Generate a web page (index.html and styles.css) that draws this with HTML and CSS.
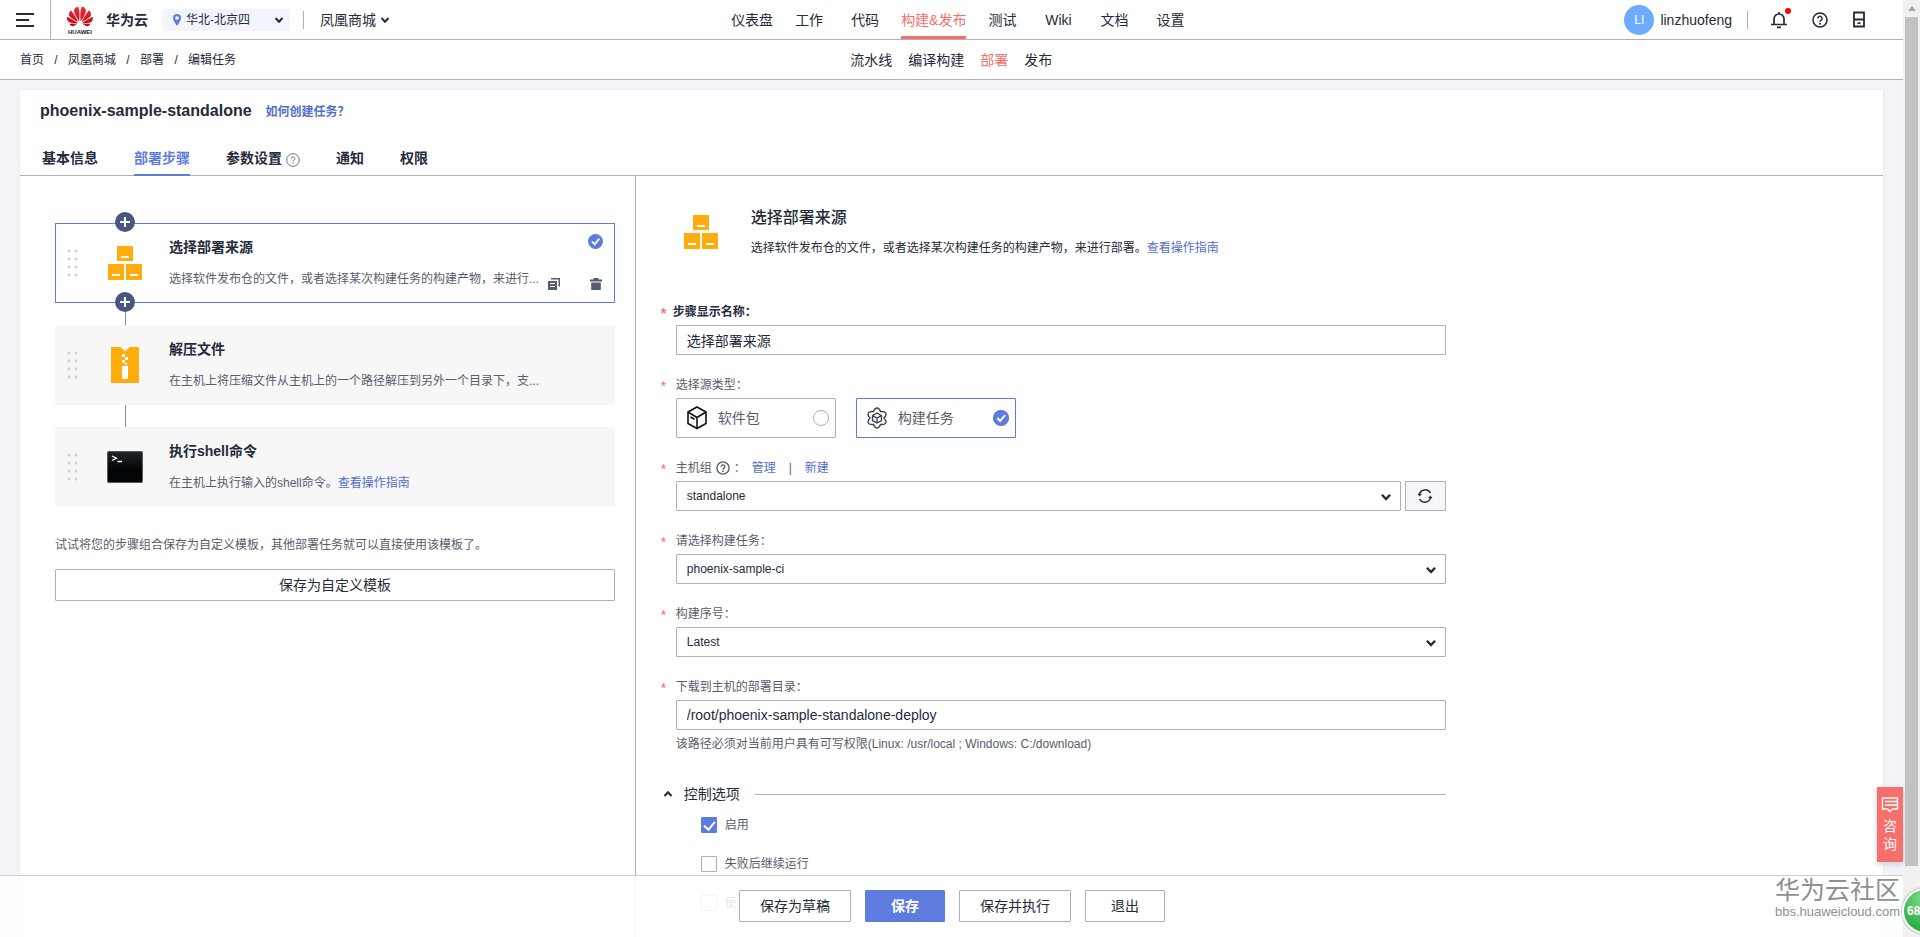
FILE: index.html
```html
<!DOCTYPE html>
<html lang="zh-CN">
<head>
<meta charset="utf-8">
<title>编辑任务 - 部署</title>
<link rel="stylesheet" href="styles.css">
</head>
<body>
<svg class="defs" aria-hidden="true">
  <symbol id="i-chevron" viewBox="0 0 12 12"><path d="M2.500 4l3.500 3.800L9.500 4" fill="none" stroke="currentColor" stroke-width="2"/></symbol>
  <symbol id="i-help" viewBox="0 0 16 16"><circle cx="8" cy="8" r="7" fill="none" stroke="currentColor" stroke-width="1.600"/><path d="M5.900 6.500a2.100 2.100 0 1 1 3.300 1.700c-.8.500-1.200.8-1.200 1.500" fill="none" stroke="currentColor" stroke-width="1.500"/><circle cx="8" cy="11.700" r="1" fill="currentColor"/></symbol>
  <symbol id="i-help-thin" viewBox="0 0 16 16"><circle cx="8" cy="8" r="7.200" fill="none" stroke="currentColor"/><path d="M5.900 6.500a2.100 2.100 0 1 1 3.300 1.700c-.8.500-1.200.8-1.200 1.500" fill="none" stroke="currentColor"/><circle cx="8" cy="11.500" r=".7" fill="currentColor"/></symbol>
  <symbol id="i-boxes" viewBox="0 0 34 34"><path d="M9 0h16v15H9zM0 18h16v16H0zM18 18h16v16H18z" fill="#ffac0c"/><path d="M13 10h8v2h-8zM4 28h8v2H4zM22 28h8v2h-8z" fill="#fff"/></symbol>
  <symbol id="i-check" viewBox="0 0 16 16"><circle cx="8" cy="8" r="8" fill="#5e7ce0"/><path d="M4.300 8l2.800 3 5-6" fill="none" stroke="#fff" stroke-width="1.900"/></symbol>
  <symbol id="i-dots" viewBox="0 0 12 28"><g fill="#d0d1d6"><circle cx="2" cy="2" r="1.500"/><circle cx="9" cy="2" r="1.500"/><circle cx="2" cy="10" r="1.500"/><circle cx="9" cy="10" r="1.500"/><circle cx="2" cy="18" r="1.500"/><circle cx="9" cy="18" r="1.500"/><circle cx="2" cy="26" r="1.500"/><circle cx="9" cy="26" r="1.500"/></g></symbol>
  <symbol id="i-plus" viewBox="0 0 20 20"><circle cx="10" cy="10" r="10" fill="#4a5682"/><path d="M10 5v10M5 10h10" stroke="#fff" stroke-width="2"/></symbol>
</svg>

<div class="window">
  <div class="app">
    <header class="topbar">
      <div class="topbar-left">
        <button class="menu-btn" aria-label="菜单"><svg width="18" height="16" viewBox="0 0 18 16"><path d="M0 2h18M0 8h13M0 14h18" stroke="#252b3a" stroke-width="2" fill="none"/></svg></button>
        <a class="brand" href="#">
          <svg width="28" height="30" viewBox="0 0 28 30">
            <defs><linearGradient id="red" x1="0" y1="0" x2="0" y2="1"><stop offset="0" stop-color="#f0303a"/><stop offset="1" stop-color="#c00612"/></linearGradient></defs>
            <path transform="translate(1 -1.500) scale(1.080)" fill="url(#red)" d="M3.670 6.140S1.820 7.910 1.720 9.780v.35c.08 1.510 1.220 2.400 1.220 2.400 1.830 1.790 6.260 4.040 7.300 4.550 0 0 .06.03.1-.01l.02-.04v-.04C7.520 10.800 3.670 6.140 3.670 6.140zM9.650 18.600c-.02-.08-.1-.08-.1-.08l-7.380.26c.8 1.430 2.150 2.530 3.560 2.200.96-.25 3.160-1.780 3.880-2.300.06-.05.04-.09.04-.09zm.08-.78C6.490 15.630.21 12.280.21 12.280c-.15.46-.2.9-.21 1.300v.07c0 1.070.4 1.820.4 1.820.8 1.690 2.340 2.200 2.340 2.200.7.3 1.400.31 1.400.31.12.02 4.390 0 5.540 0 .05 0 .08-.05.08-.05v-.06c0-.03-.03-.05-.03-.05zM9.060 3.190a3.420 3.420 0 00-2.570 3.150v.41c.03.6.16 1.050.16 1.050.66 2.900 3.860 7.650 4.550 8.650.05.05.1.03.1.03a.1.1 0 00.06-.1c1.060-10.600-1.110-13.420-1.110-13.420-.32.02-1.190.23-1.190.23zm8.299 2.270s-.49-1.800-2.440-2.280c0 0-.57-.14-1.170-.22 0 0-2.180 2.810-1.120 13.430.01.07.06.08.06.08.07.03.1-.03.1-.03.72-1.030 3.900-5.760 4.550-8.640 0 0 .36-1.400.02-2.340zm-2.920 13.070s-.07 0-.09.05c0 0-.01.07.03.1.7.51 2.850 2 3.880 2.300 0 0 .16.05.43.06h.14c.69-.02 1.900-.37 3-2.260l-7.400-.25zm7.830-8.410c.14-2.060-1.940-3.970-1.940-3.980 0 0-3.850 4.660-6.670 10.800 0 0-.03.08.02.13l.04.01h.06c1.060-.53 5.460-2.770 7.280-4.540 0 0 1.150-.93 1.210-2.420zm1.520 2.140s-6.280 3.370-9.520 5.550c0 0-.05.04-.03.11 0 0 .03.06.07.06 1.160 0 5.560 0 5.670-.02 0 0 .57-.02 1.270-.29 0 0 1.560-.5 2.370-2.270 0 0 .73-1.450.17-3.140z"/>
            <text x="14" y="29" text-anchor="middle" class="logo-text">HUAWEI</text>
          </svg>
          <strong>华为云</strong>
        </a>
        <button class="region">
          <svg width="10" height="14" viewBox="0 0 10 14"><path d="M5 1a4 4 0 0 0-4 4c0 3 4 7.800 4 7.800S9 8 9 5a4 4 0 0 0-4-4z" fill="#5e7ce0"/><circle cx="5" cy="5" r="1.800" fill="#fff"/></svg>
          <span>华北-北京四</span>
          <svg class="end" width="12" height="12"><use href="#i-chevron"/></svg>
        </button>
        <i class="rule"></i>
        <button class="project">凤凰商城<svg width="12" height="12"><use href="#i-chevron"/></svg></button>
      </div>
      <nav class="mainnav">
        <a href="#">仪表盘</a><a href="#">工作</a><a href="#">代码</a><a href="#" class="active">构建&amp;发布</a><a href="#">测试</a><a href="#">Wiki</a><a href="#">文档</a><a href="#">设置</a>
      </nav>
      <div class="topbar-right">
        <span class="avatar">LI</span>
        <span class="user">linzhuofeng</span>
        <i class="rule"></i>
        <button class="icon-btn" aria-label="消息"><svg width="18" height="18" viewBox="0 0 18 18"><path d="M4 13V8a5 5 0 0 1 10 0v5M1 13.500h16M9 1v2" fill="none" stroke="#252b3a" stroke-width="1.700"/><path d="M7 15.500h4v1.700H7z" fill="#252b3a"/></svg><b class="dot"></b></button>
        <button class="icon-btn" aria-label="帮助"><svg width="16" height="16"><use href="#i-help"/></svg></button>
        <button class="icon-btn" aria-label="控制台"><svg width="14" height="17" viewBox="0 0 14 17"><path d="M2 1.500h10v14H2zM2 8.500h10" fill="none" stroke="#252b3a" stroke-width="1.800"/><path d="M5.500 11.300h3v1.700h-3z" fill="#252b3a"/></svg></button>
      </div>
    </header>

    <div class="subbar">
      <nav class="crumbs"><a href="#">首页</a><i>/</i><a href="#">凤凰商城</a><i>/</i><a href="#">部署</a><i>/</i><span>编辑任务</span></nav>
      <nav class="subnav"><a href="#">流水线</a><a href="#">编译构建</a><a href="#" class="active">部署</a><a href="#">发布</a></nav>
    </div>

    <main class="page">
      <div class="card">
        <div class="title-row"><h1>phoenix-sample-standalone</h1><a href="#">如何创建任务？</a></div>
        <nav class="tabs">
          <a href="#">基本信息</a><a href="#" class="active">部署步骤</a><a href="#">参数设置<svg width="14" height="14"><use href="#i-help-thin"/></svg></a><a href="#">通知</a><a href="#">权限</a>
        </nav>
        <div class="split">
          <section class="steps">
            <article class="step selected">
              <button class="plus top" aria-label="在前面添加"><svg width="20" height="20"><use href="#i-plus"/></svg></button>
              <svg class="grip" width="12" height="28"><use href="#i-dots"/></svg>
              <div class="step-icon"><svg width="34" height="34"><use href="#i-boxes"/></svg></div>
              <div class="step-text"><h3>选择部署来源</h3><p>选择软件发布仓的文件，或者选择某次构建任务的构建产物，来进行...</p></div>
              <div class="step-tools">
                <svg class="mark" width="15" height="15"><use href="#i-check"/></svg>
                <button aria-label="复制"><svg width="12" height="12" viewBox="0 0 12 12"><path d="M3 0h9v8.500h-1.500v-7H3zM0 3h9v9H0z" fill="#575d6c"/><path d="M2 5.500h5M2 8.500h5" stroke="#fff"/></svg></button>
                <button aria-label="删除"><svg width="12" height="12" viewBox="0 0 12 12"><path d="M0 1.500h3.500V0h5v1.500H12V3.500H0zM1.200 4.500h9.600V12H1.200z" fill="#575d6c"/></svg></button>
              </div>
              <button class="plus bottom" aria-label="在后面添加"><svg width="20" height="20"><use href="#i-plus"/></svg></button>
            </article>
            <i class="link"></i>
            <article class="step">
              <svg class="grip" width="12" height="28"><use href="#i-dots"/></svg>
              <div class="step-icon"><svg width="28" height="36" viewBox="0 0 28 36"><path d="M0 0h9.500L14 4.500 18.500 0H28v36H0z" fill="#ffac0c"/><path d="M11 7h3v3h-3zM14 10h3v3h-3zM11 13h3v3h-3zM14 16h2v2h-2zM11 19h6v13h-6z" fill="#fff"/></svg></div>
              <div class="step-text"><h3>解压文件</h3><p>在主机上将压缩文件从主机上的一个路径解压到另外一个目录下，支...</p></div>
              <div class="step-tools"></div>
            </article>
            <i class="link"></i>
            <article class="step">
              <svg class="grip" width="12" height="28"><use href="#i-dots"/></svg>
              <div class="step-icon"><svg width="36" height="32" viewBox="0 0 36 32"><defs><linearGradient id="term" x1="0" y1="0" x2="0" y2="1"><stop offset="0" stop-color="#20262a"/><stop offset=".6" stop-color="#020406"/></linearGradient></defs><rect x=".5" y=".5" width="35" height="31" rx="1" fill="url(#term)" stroke="#55595d"/><path d="M5 5l4.500 2.200L5 9.500M10.500 10.500H15" fill="none" stroke="#fff" stroke-width="1.300"/></svg></div>
              <div class="step-text"><h3>执行shell命令</h3><p>在主机上执行输入的shell命令。<a href="#">查看操作指南</a></p></div>
              <div class="step-tools"></div>
            </article>
            <p class="tip">试试将您的步骤组合保存为自定义模板，其他部署任务就可以直接使用该模板了。</p>
            <button class="btn wide">保存为自定义模板</button>
          </section>

          <section class="detail">
            <div class="detail-head">
              <svg width="34" height="34"><use href="#i-boxes"/></svg>
              <div><h2>选择部署来源</h2><p>选择软件发布仓的文件，或者选择某次构建任务的构建产物，来进行部署。<a href="#">查看操作指南</a></p></div>
            </div>
            <form class="form">
              <div class="field">
                <label class="label strong" for="name">步骤显示名称：</label>
                <input class="control" id="name" type="text" value="选择部署来源">
              </div>
              <div class="field">
                <span class="label" id="src">选择源类型：</span>
                <div class="choices" role="radiogroup" aria-labelledby="src">
                  <label class="choice">
                    <svg width="22" height="24" viewBox="0 0 22 24"><path d="M11 1l9 5v11.500l-9 5-9-5V6zM2 6l9 5.500L20 6M11 11.500v11M4.500 11l4 2.300" fill="none" stroke="#111" stroke-width="1.600"/></svg>
                    <span>软件包</span><input type="radio" name="source">
                  </label>
                  <label class="choice on">
                    <svg width="20" height="22" viewBox="0 0 20 22"><g fill="none" stroke="#3c4150" stroke-width="1.400"><path d="M10 6l4.500 2.600v5L10 16l-4.500-2.400v-5zM5.500 8.600L10 11l4.500-2.400M10 11v5"/><path d="M6.500 4.500C7.500 2 8.800 1 10 1s2.500 1 3.500 3.500c2.800-.2 4.500.2 5.200 1.500s.1 3-1.700 5c1.800 2 2.400 3.700 1.700 5s-2.400 1.700-5.200 1.500C12.500 20 11.200 21 10 21s-2.500-1-3.500-3.500c-2.800.2-4.500-.2-5.200-1.500s-.1-3 1.700-5C1.200 9 .6 7.300 1.300 6s2.400-1.700 5.200-1.500z"/></g></svg>
                    <span>构建任务</span><input type="radio" name="source" checked><svg class="tick" width="16" height="16"><use href="#i-check"/></svg>
                  </label>
                </div>
              </div>
              <div class="field">
                <div class="label-row"><label class="label" for="group">主机组</label><svg width="14" height="14"><use href="#i-help"/></svg><span>：</span><a href="#">管理</a><i>|</i><a href="#">新建</a></div>
                <div class="row">
                  <div class="select"><select class="control" id="group"><option>standalone</option></select><svg width="14" height="14"><use href="#i-chevron"/></svg></div>
                  <button type="button" class="refresh" aria-label="刷新"><svg width="16" height="16" viewBox="0 0 16 16"><path d="M2.300 7A6 6 0 0 1 13.500 5M13.700 9A6 6 0 0 1 2.500 11" fill="none" stroke="#252b3a" stroke-width="1.500"/><path d="M.5 5.500l2 3 2.500-2.500zM15.500 10.500l-2-3L11 10z" fill="#252b3a"/></svg></button>
                </div>
              </div>
              <div class="field">
                <label class="label" for="task">请选择构建任务：</label>
                <div class="select"><select class="control" id="task"><option>phoenix-sample-ci</option></select><svg width="14" height="14"><use href="#i-chevron"/></svg></div>
              </div>
              <div class="field">
                <label class="label" for="build">构建序号：</label>
                <div class="select"><select class="control" id="build"><option>Latest</option></select><svg width="14" height="14"><use href="#i-chevron"/></svg></div>
              </div>
              <div class="field">
                <label class="label" for="dir">下载到主机的部署目录：</label>
                <input class="control" id="dir" type="text" value="/root/phoenix-sample-standalone-deploy">
                <p class="hint">该路径必须对当前用户具有可写权限(Linux: /usr/local ; Windows: C:/download)</p>
              </div>
              <div class="group-head"><svg width="12" height="12"><use href="#i-chevron"/></svg><span>控制选项</span><i></i></div>
              <div class="checks">
                <label><input type="checkbox" checked>启用</label>
                <label><input type="checkbox">失败后继续运行</label>
                <label><input type="checkbox">使</label>
              </div>
            </form>
          </section>
        </div>
      </div>
    </main>

    <footer class="actions">
      <button class="btn">保存为草稿</button>
      <button class="btn primary">保存</button>
      <button class="btn">保存并执行</button>
      <button class="btn">退出</button>
    </footer>
    <button class="consult"><svg width="18" height="16" viewBox="0 0 18 16"><path d="M1.500 1h15v11h-5L9 14.500 6.500 12h-5zM4 4.500h12M4 8h12" fill="none" stroke="#fff" stroke-width="1.400"/></svg><span>咨</span><span>询</span></button>
    <div class="watermark"><b>华为云社区</b><span>bbs.huaweicloud.com</span></div>
  </div>
  <div class="scrollbar"><i class="arrow"></i><i class="thumb"></i></div>
  <div class="ball">68</div>
</div>
</body>
</html>
```

FILE: styles.css
```css
* { box-sizing: border-box; }
body, h1, h2, h3, p { margin: 0; }
body {
  font: 14px/20px "Liberation Sans", "Noto Sans CJK SC", sans-serif;
  color: #252b3a;
  background: #f2f4f8;
}
a { color: inherit; text-decoration: none; }
i { font-style: normal; }
svg { display: block; flex: none; }
button { font: inherit; color: inherit; border: 0; padding: 0; background: none; }
.defs { position: absolute; width: 0; height: 0; }

.window { position: relative; display: flex; height: 100vh; overflow: hidden; }
.app { position: relative; flex: 1; min-width: 0; display: flex; flex-direction: column; }

/* top bar */
.topbar { display: flex; height: 40px; flex: none; background: #fff; border-bottom: 1px solid #adb0b8; }
.topbar-left { flex: 0 0 38%; display: flex; align-items: center; }
.menu-btn { width: 51px; height: 100%; padding-left: 16px; border-right: 1px solid #adb0b8; }
.brand { display: flex; align-items: center; gap: 12px; margin: 0 14px 0 15px; }
.brand strong { font-size: 14px; }
.logo-text { font: bold 6px "Liberation Sans", sans-serif; fill: #222; }
.region { display: flex; align-items: center; gap: 4px; width: 128px; height: 22px; padding: 0 5px 0 10px; background: #f2f5fc; font-size: 12px; }
.region .end { margin-left: auto; }
.rule { width: 1px; height: 18px; background: #adb0b8; }
.topbar-left .rule { margin: 0 16px 0 13px; }
.project { display: flex; align-items: center; gap: 3px; }
.mainnav { display: flex; }
.mainnav a { min-width: 56px; padding: 0 8px; line-height: 40px; text-align: center; position: relative; }
.mainnav .active, .subnav .active { color: #f66f6a; }
.mainnav .active::after { content: ""; position: absolute; left: 8px; right: 8px; bottom: 0; height: 3px; background: #f66f6a; }
.topbar-right { margin-left: auto; display: flex; align-items: center; padding-right: 37px; }
.avatar { width: 30px; height: 30px; border-radius: 50%; background: #6cabff; color: #fff; font-size: 12px; line-height: 30px; text-align: center; }
.user { margin: 0 15px 0 6px; }
.icon-btn { position: relative; margin-left: 24px; }
.rule + .icon-btn { margin-left: 22px; }
.dot { position: absolute; right: -3px; top: -3px; width: 6px; height: 6px; border-radius: 50%; background: #f00; }

.subbar { display: flex; align-items: center; height: 40px; flex: none; background: #fff; border-bottom: 1px solid #adb0b8; }
.crumbs { flex: 0 0 45%; padding-left: 20px; display: flex; font-size: 12px; }
.crumbs i { width: 24px; text-align: center; }
.subnav { display: flex; gap: 16px; margin-left: -6px; }

/* card */
.page { flex: 1; min-height: 0; padding: 10px 20px 0; overflow: hidden; display: flex; }
.card { flex: 1; display: flex; flex-direction: column; background: #fff; box-shadow: 0 0 3px #e0e3ea; }
.title-row { display: flex; align-items: center; gap: 14px; padding: 10px 20px 0; }
.title-row h1 { font-size: 16px; line-height: 22px; }
.title-row a { font-size: 12px; font-weight: bold; color: #526ecc; padding-top: 2px; }
.tabs { display: flex; gap: 36px; margin-top: 17px; padding: 0 22px; border-bottom: 1px solid #adb0b8; font-weight: bold; }
.tabs a { display: flex; align-items: center; gap: 4px; line-height: 20px; height: 37px; padding-top: 3px; margin-bottom: -1px; border-bottom: 2px solid transparent; }
.tabs .active { color: #5e7ce0; border-color: #5e7ce0; }
.tabs svg { color: #575d6c; margin-top: 4px; }
.split { display: flex; flex: 1; }

/* steps */
.steps { flex: 0 0 calc(33% + 1px); min-width: 0; border-right: 1px solid #adb0b8; padding: 47px 20px 0 35px; }
.step { position: relative; display: flex; align-items: stretch; height: 80px; background: #f7f7f8; border: 1px solid transparent; }
.step.selected { background: #fff; border-color: #5e7ce0; }
.grip { margin: 25px 0 0 11px; }
.step-icon { width: 92px; display: flex; align-items: center; justify-content: center; }
.step-text { flex: 1; min-width: 0; margin-left: -2px; padding-top: 12px; }
.step-text h3 { font-size: 14px; line-height: 22px; }
.step-text p { margin-top: 11px; font-size: 12px; line-height: 20px; color: #575d6c; white-space: nowrap; overflow: hidden; text-overflow: ellipsis; }
.step-text a, .detail-head a, .label-row a { color: #526ecc; }
.step-tools { width: 66px; padding: 10px 12px 12px 0; display: grid; grid-template-columns: 12px 12px; justify-content: space-between; align-content: space-between; }
.step-tools .mark { grid-column: 2; justify-self: center; }
.plus { position: absolute; left: 59px; z-index: 1; }
.plus.top { top: -12px; }
.plus.bottom { bottom: -10px; }
.link { display: block; width: 1px; height: 22px; margin-left: 70px; background: #8a8e99; }
.tip { margin: 28px 0 14px; font-size: 12px; line-height: 20px; color: #575d6c; }
.btn { height: 32px; padding: 0 20px; min-width: 80px; background: #fff; border: 1px solid #adb0b8; border-radius: 1px; }
.btn.wide { width: 100%; }
.btn.primary { background: #5e7ce0; border-color: #5e7ce0; color: #fff; font-weight: bold; }

/* detail */
.detail { flex: 1; padding: 30px 25px 0; }
.detail-head { display: flex; gap: 33px; align-items: center; padding-left: 23px; }
.detail-head h2 { font-size: 16px; line-height: 24px; font-weight: 500; }
.detail-head p { margin-top: 8px; font-size: 12px; line-height: 20px; }
.form { width: 100%; max-width: 785px; margin-top: 44px; padding-left: 15px; }
.field { margin-bottom: 20px; }
.label, .label-row { font-size: 12px; line-height: 20px; color: #575d6c; }
.label { display: block; margin-left: -15px; }
.label::before { content: "*"; display: inline-block; width: 15px; color: #f66f6a; font-size: 14px; line-height: 14px; vertical-align: -2px; }
.label.strong { color: #252b3a; font-weight: bold; }
.label.strong::before { width: 12px; }
.label-row { display: flex; align-items: center; gap: 4px; }
.label-row span { width: 14px; }
.label-row i { width: 21px; text-align: center; }
.control { display: block; width: 100%; height: 30px; margin: 0; padding: 0 10px; border: 1px solid #adb0b8; border-radius: 1px; background: #fff; color: #252b3a; font: 14px "Liberation Sans", "Noto Sans CJK SC", sans-serif; appearance: none; }
select.control { font-size: 12px; }
.field .control, .field .choices, .field .row { margin-top: 3px; }
.field .row .control { margin-top: 0; }
.select { position: relative; flex: 1; }
.select svg { position: absolute; right: 8px; bottom: 7px; pointer-events: none; }
.row { display: flex; gap: 4px; }
.refresh { width: 41px; height: 30px; border: 1px solid #adb0b8; background: #f6f7fb; display: flex; align-items: center; justify-content: center; }
.choices { display: flex; gap: 20px; }
.choice { position: relative; display: flex; align-items: center; gap: 10px; width: 160px; height: 40px; padding: 0 6px 0 9px; border: 1px solid #adb0b8; border-radius: 1px; color: #575d6c; }
.choice > svg:first-child { width: 22px; }
.choice.on { border-color: #5e7ce0; }
.choice input { appearance: none; width: 16px; height: 16px; margin: 0 0 0 auto; border: 1px solid #adb0b8; border-radius: 50%; }
.choice .tick { position: absolute; right: 6px; top: 11px; }
.hint { margin-top: 5px; font-size: 12px; line-height: 18px; color: #575d6c; }
.group-head { display: flex; align-items: center; gap: 10px; margin: 30px 0 10px -14px; line-height: 22px; }
.group-head svg { rotate: 180deg; }
.group-head i { flex: 1; height: 1px; margin-left: 5px; background: #adb0b8; }
.checks { padding-left: 25px; display: grid; gap: 19px; font-size: 12px; color: #575d6c; }
.checks label { display: flex; align-items: center; gap: 8px; }
.checks input { appearance: none; width: 16px; height: 16px; margin: 0; border: 1px solid #adb0b8; border-radius: 1px; background: #fff; }
.checks input:checked { background: #5e7ce0; border-color: #5e7ce0; }
.checks input:checked::after { content: ""; display: block; width: 5px; height: 9px; margin: 1px 0 0 4px; border: solid #fff; border-width: 0 2px 2px 0; rotate: 40deg; }

/* floating parts */
.actions { position: absolute; left: 0; right: 0; bottom: 0; display: flex; gap: 14px; padding: 14px 20px 15px 739px; background: rgba(255, 255, 255, .85); border-top: 1px solid #ccced4; }
.consult { position: absolute; right: 0; bottom: 75px; width: 26px; height: 75px; background: #f66f6a; color: #fff; display: flex; flex-direction: column; align-items: center; justify-content: center; line-height: 18px; box-shadow: 0 2px 6px #c8ccd6; }
.consult svg { margin-bottom: 4px; }
.watermark { position: absolute; right: 3px; bottom: 16px; color: #909090; text-align: right; }
.watermark b, .watermark span { display: block; }
.watermark b { font-weight: normal; font-size: 25px; line-height: 26px; }
.watermark span { font-size: 13px; line-height: 18px; }
.scrollbar { flex: 0 0 17px; padding: 0 2px; background: #f1f1f1; }
.arrow { display: block; width: 0; margin: 6px auto; border: 4px solid transparent; border-top: 0; border-bottom: 5px solid #a3a3a3; }
.thumb { display: block; height: calc(100% - 88px); background: #c1c1c1; }
.ball { position: absolute; right: -28px; bottom: 3px; width: 46px; height: 46px; padding-left: 3px; border: 2px solid #fff; border-radius: 50%; background: radial-gradient(circle at 50% 20%, #7fe08a, #2fae45 75%); box-shadow: 0 0 2px #555; color: #fff; font-size: 12px; line-height: 42px; font-weight: bold; }
```
